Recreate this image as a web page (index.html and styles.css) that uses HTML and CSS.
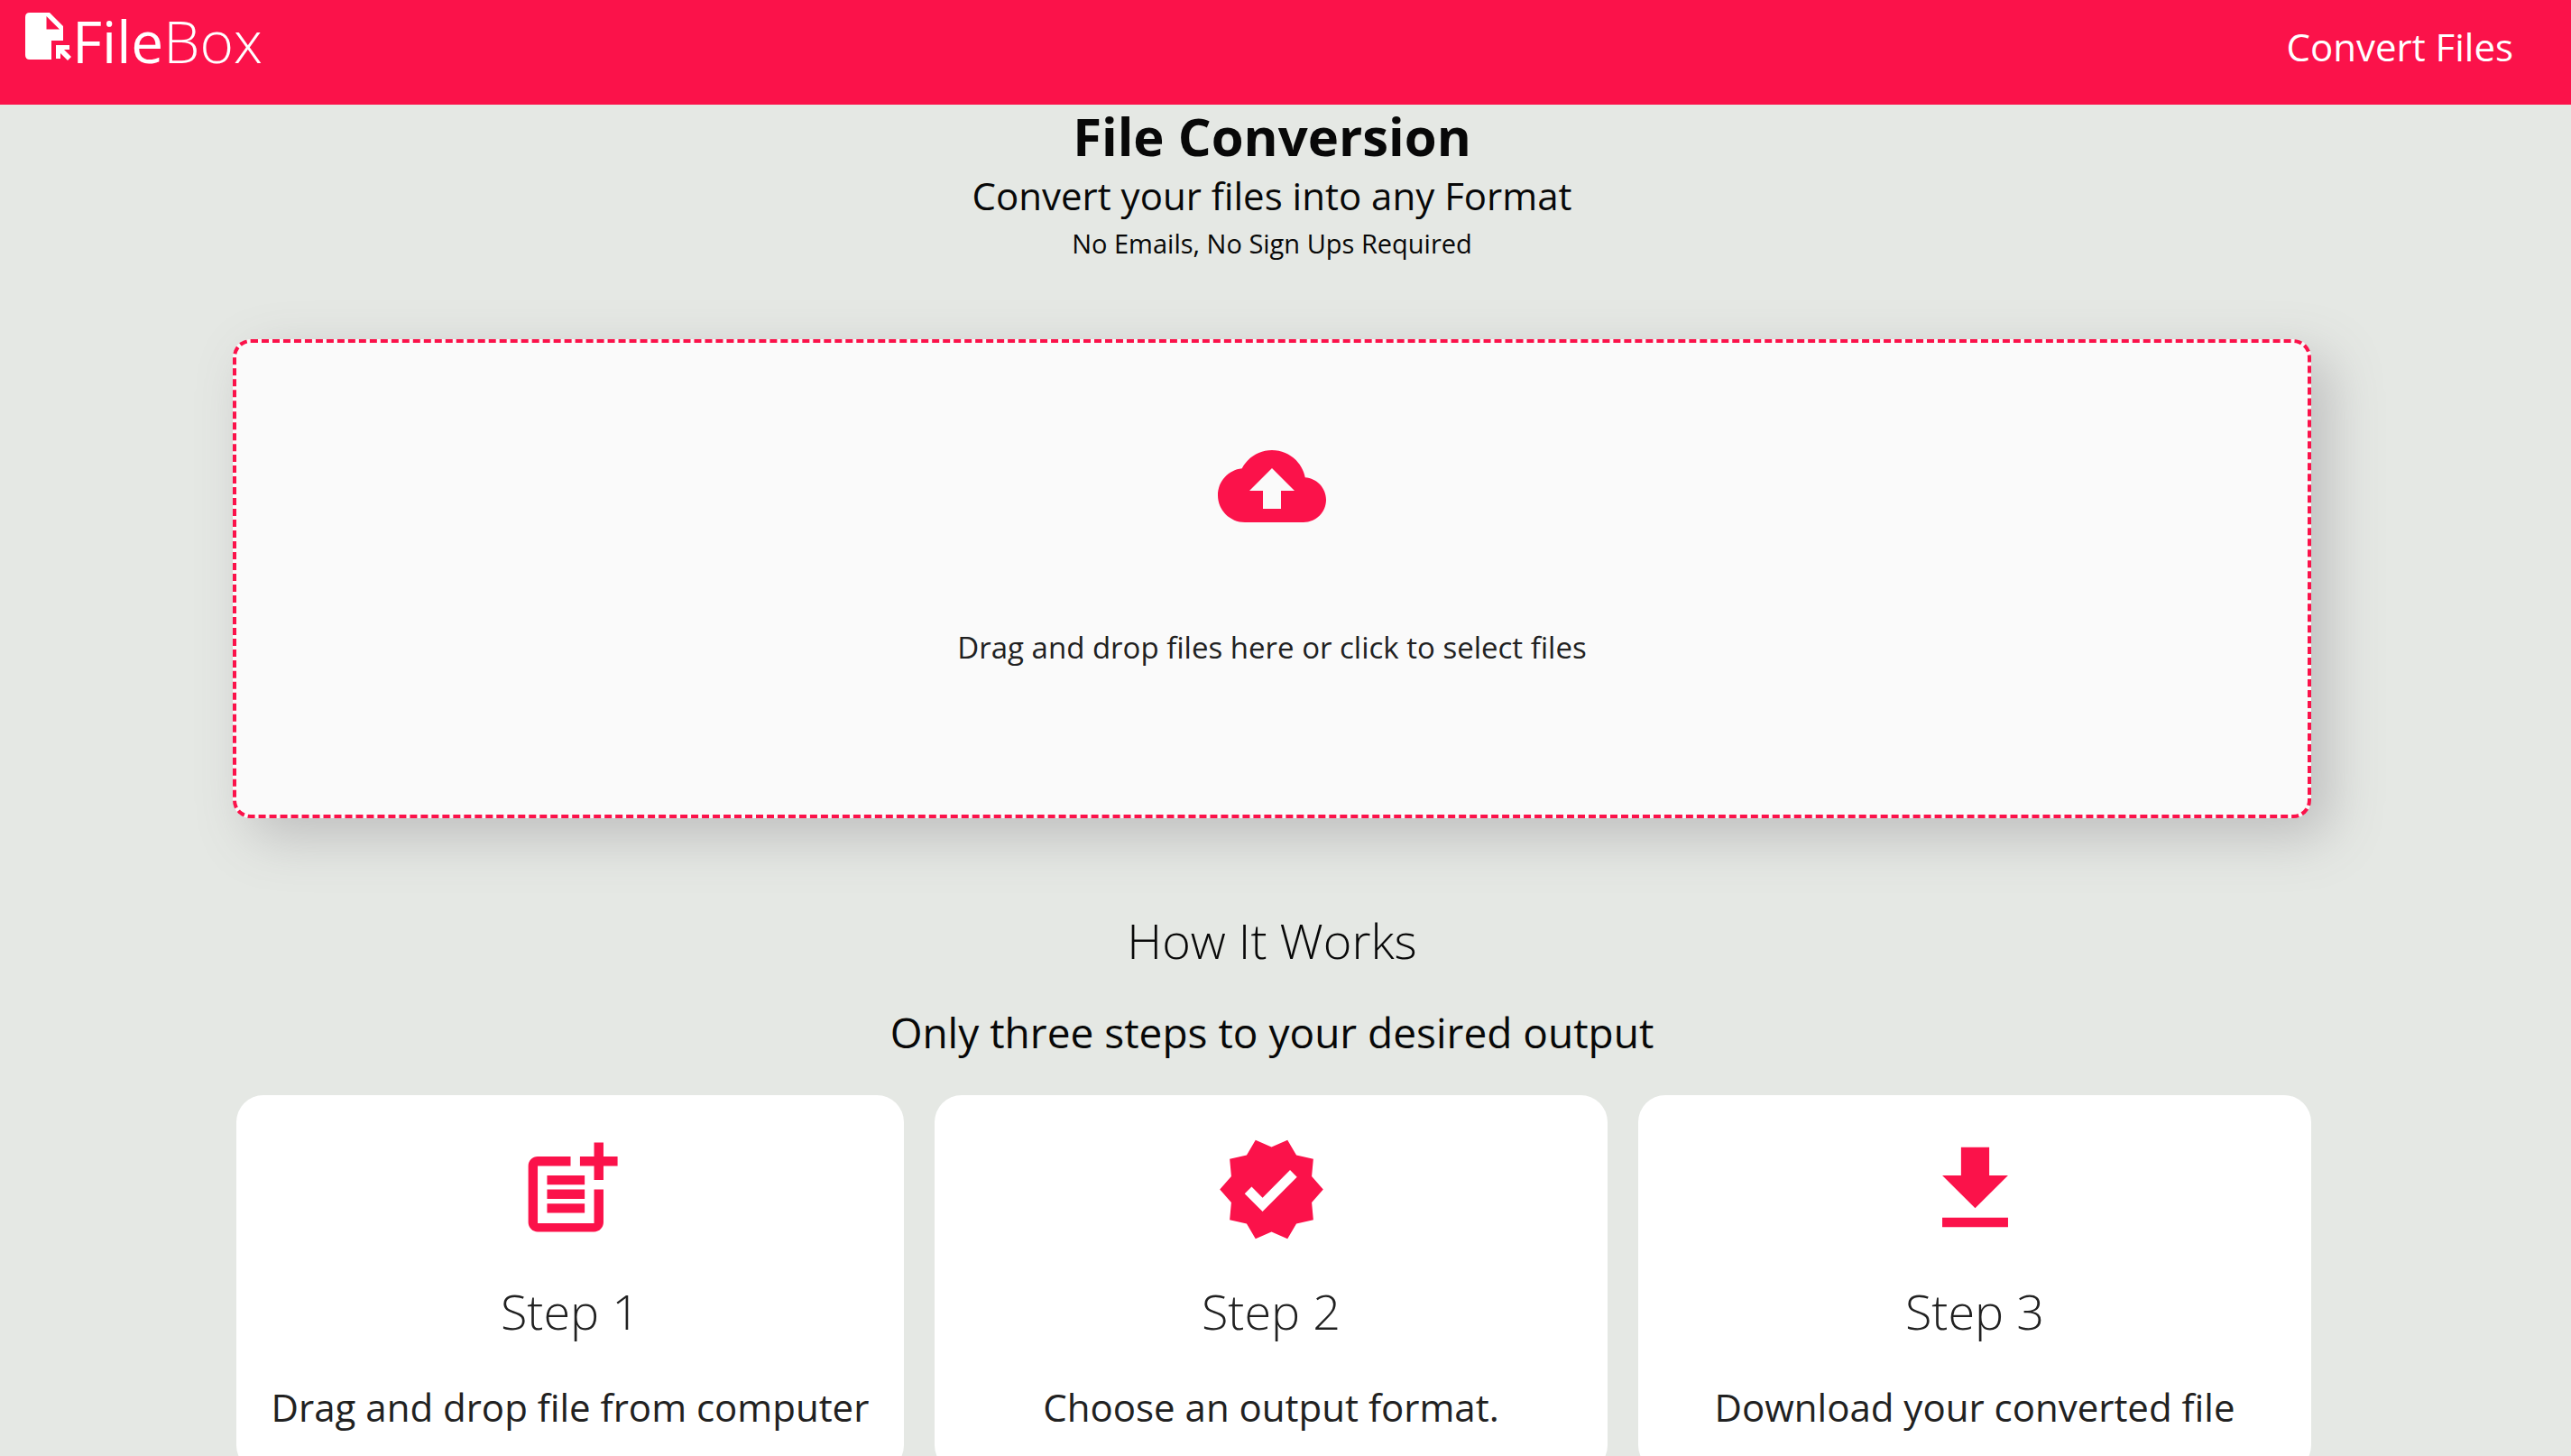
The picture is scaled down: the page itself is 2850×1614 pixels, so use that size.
FILE: index.html
```html
<!DOCTYPE html>
<html lang="en">
<head>
<meta charset="utf-8">
<title>FileBox - Convert Files</title>
<meta name="viewport" content="width=device-width, initial-scale=1">
<link rel="stylesheet" href="styles.css">
</head>
<body>
<header class="topbar">
  <a class="brand" href="#">
    <svg class="brand-icon" viewBox="0 0 52 54" aria-hidden="true">
      <path fill-rule="evenodd" d="M5 0H27L42 15V31H29V52H5Q0 52 0 47V5Q0 0 5 0ZM23.500 4V18.500H38Z"/>
      <path d="M34 36H49V41H43L51 49L47 53L39 45V51H34Z"/>
    </svg>
    <span class="brand-name"><span class="brand-strong">File</span>Box</span>
  </a>
  <nav class="nav"><a class="nav-link" href="#convert">Convert Files</a></nav>
</header>
<main class="page">
  <section class="intro">
    <h1 class="title">File Conversion</h1>
    <p class="lead">Convert your files into any Format</p>
    <p class="note">No Emails, No Sign Ups Required</p>
  </section>
  <label class="dropzone" id="convert">
    <input class="file-input" type="file" multiple>
    <svg class="cloud" viewBox="0 0 24 24" aria-hidden="true"><path d="M19.350 10.040C18.670 6.590 15.640 4 12 4 9.110 4 6.600 5.640 5.350 8.040 2.340 8.360 0 10.910 0 14c0 3.310 2.690 6 6 6h13c2.760 0 5-2.240 5-5 0-2.640-2.050-4.780-4.650-4.960zM14 13v4h-4v-4H7l5-5 5 5h-3z"/></svg>
    <span class="drop-text">Drag and drop files here or click to select files</span>
  </label>
  <section class="how">
    <h2 class="heading">How It Works</h2>
    <p class="subheading">Only three steps to your desired output</p>
    <div class="steps">
      <article class="card">
        <svg class="step-icon" viewBox="0 0 24 24" aria-hidden="true"><path d="M17 19.220H5V7h7V5H5c-1.100 0-2 .9-2 2v12c0 1.100.9 2 2 2h12c1.100 0 2-.9 2-2v-7h-2v7.220zM19 2h-2v3h-3v2h3v3h2V7h3V5h-3V2zM7 9h8v2H7zM7 12h8v2H7zM7 15h8v2H7z"/></svg>
        <h3 class="heading">Step 1</h3>
        <p class="card-text">Drag and drop file from computer</p>
      </article>
      <article class="card">
        <svg class="step-icon" viewBox="0 0 24 24" aria-hidden="true"><path d="M23 12l-2.440-2.790.34-3.690-3.610-.82-1.890-3.200L12 2.960 8.600 1.500 6.710 4.690 3.100 5.500l.34 3.700L1 12l2.440 2.790-.34 3.700 3.610.82L8.600 22.500l3.400-1.470 3.400 1.460 1.890-3.190 3.610-.82-.34-3.690L23 12zm-12.910 4.720l-3.800-3.810 1.480-1.480 2.320 2.330 5.850-5.870 1.480 1.480-7.330 7.350z"/></svg>
        <h3 class="heading">Step 2</h3>
        <p class="card-text">Choose an output format.</p>
      </article>
      <article class="card">
        <svg class="step-icon" viewBox="0 0 24 24" aria-hidden="true"><path d="M19 9h-4V3H9v6H5l7 7 7-7zM5 18v2h14v-2H5z"/></svg>
        <h3 class="heading">Step 3</h3>
        <p class="card-text">Download your converted file</p>
      </article>
    </div>
  </section>
</main>
</body>
</html>
```
FILE: styles.css
```css
:root {
  --accent: #fb124a;
  --surface: #e5e8e4;
}

* {
  box-sizing: border-box;
}

body {
  margin: 0;
  background: var(--surface);
  color: #080808;
  font-family: "Open Sans", sans-serif;
}

h1, h2, h3, p {
  margin: 0;
  font-weight: 400;
}

svg {
  display: block;
  fill: currentColor;
}

a {
  color: inherit;
  text-decoration: none;
}

.topbar {
  display: flex;
  justify-content: space-between;
  align-items: flex-start;
  min-height: 116px;
  padding: 2px 64px 0 28px;
  background: var(--accent);
  color: #fff;
}

.brand {
  display: flex;
  align-items: flex-start;
}

.brand-icon {
  width: 52px;
  height: 54px;
  margin-top: 12px;
}

.brand-name {
  font-size: 64px;
  font-weight: 300;
  line-height: 88px;
}

.brand-strong {
  font-weight: 500;
}

.nav {
  padding-top: 20px;
}

.nav-link {
  display: block;
  font-size: 42px;
  line-height: 60px;
}

.page {
  display: flex;
  flex-direction: column;
  align-items: center;
  margin-right: 30px;
  text-align: center;
}

.title {
  font-size: 58px;
  font-weight: 700;
  line-height: 70px;
}

.lead {
  font-size: 42px;
  line-height: 62px;
}

.note {
  font-size: 29px;
  line-height: 44px;
}

.dropzone {
  display: flex;
  flex-direction: column;
  align-items: center;
  width: 90%;
  max-width: 2304px;
  min-height: 531px;
  margin-top: 84px;
  padding: 99px 40px;
  border: 4px dashed var(--accent);
  border-radius: 20px;
  background: #fafafa;
  box-shadow: 20px 20px 60px #bebebe;
  color: #212121;
  cursor: pointer;
}

.file-input {
  position: absolute;
  width: 1px;
  height: 1px;
  opacity: 0;
}

.cloud {
  width: 120px;
  height: 120px;
  color: var(--accent);
}

.drop-text {
  margin-top: 95px;
  font-size: 33px;
  line-height: 48px;
}

.how {
  width: 90%;
  max-width: 2304px;
  margin-top: 96px;
}

.heading {
  font-size: 54px;
  font-weight: 300;
  line-height: 78px;
}

.subheading {
  margin-top: 32px;
  font-size: 46px;
  line-height: 62px;
}

.steps {
  display: grid;
  grid-template-columns: 740fr 746fr 746fr;
  gap: 34px;
  margin-top: 39px;
  padding-left: 4px;
}

.card {
  display: flex;
  flex-direction: column;
  align-items: center;
  padding: 42px 24px;
  border-radius: 30px;
  background: #fff;
  color: #212121;
}

.step-icon {
  width: 125px;
  height: 125px;
  margin-bottom: 33px;
  color: var(--accent);
}

.card-text {
  margin-top: 38px;
  font-size: 42px;
  line-height: 60px;
}
```
